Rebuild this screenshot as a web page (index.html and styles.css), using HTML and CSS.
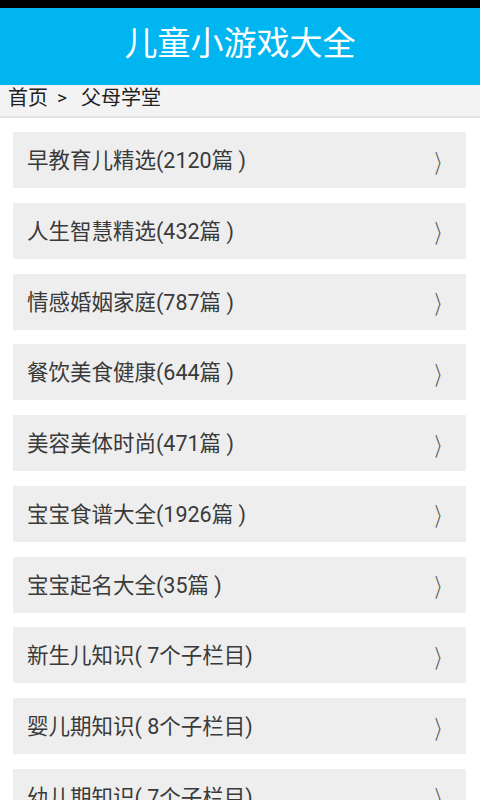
FILE: index.html
```html
<!DOCTYPE html>
<html lang="zh">
<head>
<meta charset="utf-8">
<link rel="stylesheet" href="styles.css">
</head>
<body>
<div class="status"></div>
<header class="bar"><h1 class="title">儿童小游戏大全</h1></header>
<nav class="crumb"><span>首页</span><span class="sep">&gt;</span><span>父母学堂</span></nav>
<ul class="list">
<li class="item"><span class="label">早教育儿精选(2120篇 )</span><span class="chev">〉</span></li>
<li class="item"><span class="label">人生智慧精选(432篇 )</span><span class="chev">〉</span></li>
<li class="item"><span class="label">情感婚姻家庭(787篇 )</span><span class="chev">〉</span></li>
<li class="item"><span class="label">餐饮美食健康(644篇 )</span><span class="chev">〉</span></li>
<li class="item"><span class="label">美容美体时尚(471篇 )</span><span class="chev">〉</span></li>
<li class="item"><span class="label">宝宝食谱大全(1926篇 )</span><span class="chev">〉</span></li>
<li class="item"><span class="label">宝宝起名大全(35篇 )</span><span class="chev">〉</span></li>
<li class="item"><span class="label">新生儿知识( 7个子栏目)</span><span class="chev">〉</span></li>
<li class="item"><span class="label">婴儿期知识( 8个子栏目)</span><span class="chev">〉</span></li>
<li class="item"><span class="label">幼儿期知识( 7个子栏目)</span><span class="chev">〉</span></li>
</ul>
</body>
</html>
```
FILE: styles.css
```css
html, body {
  margin: 0;
  padding: 0;
  background: #ffffff;
  overflow: hidden;
  height: 800px;
}
body {
  font-family: Roboto, "Noto Sans CJK SC", sans-serif;
  color: #333333;
}
.status {
  height: 8px;
  background: #000000;
}
.bar {
  height: 77px;
  background: #00b5f0;
  display: flex;
  align-items: center;
  justify-content: center;
}
.title {
  margin: 0;
  font-weight: normal;
  font-size: 33px;
  color: #ffffff;
  line-height: 1;
  padding-bottom: 6px;
}
.crumb {
  height: 31px;
  background: #f3f3f3;
  border-bottom: 2px solid #e4e4e4;
  font-size: 20px;
  line-height: 26px;
  padding-left: 8px;
  color: #222222;
  display: flex;
  align-items: flex-start;
}
.sep {
  font-size: 19px;
  margin: 0 14px 0 9px;
}
.list {
  list-style: none;
  margin: 0;
  padding: 14px 14px 0 13px;
  display: flex;
  flex-direction: column;
  gap: 14.75px;
}
.item {
  height: 56px;
  background: #eeeeee;
  display: flex;
  align-items: center;
  justify-content: space-between;
  padding: 0 12px 0 14px;
  flex-shrink: 0;
}
.label {
  font-size: 21.5px;
  color: #3a3a3a;
  margin-top: -3px;
}
.chev {
  font-size: 25px;
  line-height: 1;
  color: #555555;
  transform: scaleX(0.55);
  margin-top: 8px;
}
```
